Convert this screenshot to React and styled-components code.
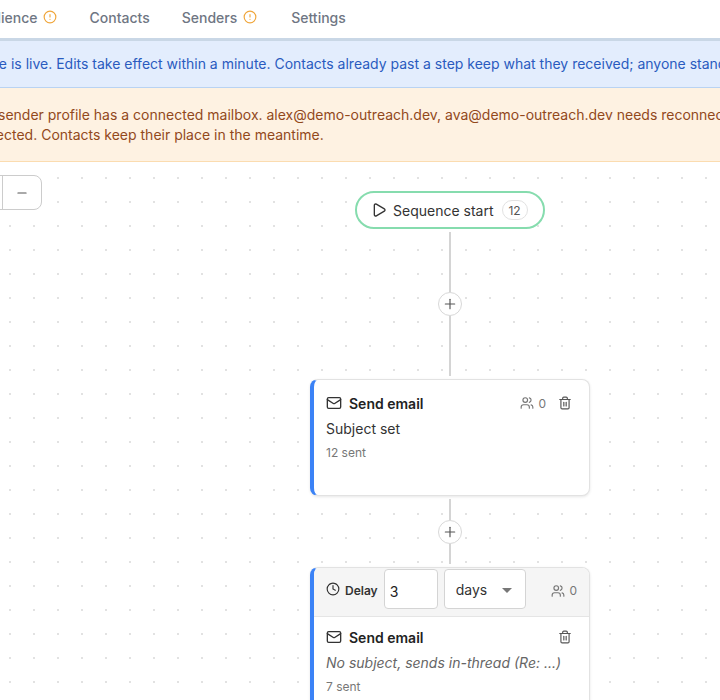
import React from 'react';
import styled, { createGlobalStyle } from 'styled-components';
import { CircleAlert, Clock, Mail, Minus, Play, Plus, Trash2, Users } from 'lucide-react';

const GlobalStyle = createGlobalStyle`
  html, body {
    margin: 0;
    height: 700px;
    overflow: hidden;
    background: #fff;
    font-family: Inter, "Liberation Sans", sans-serif;
  }
`;

const TABS = [
  { label: 'Audience', warn: true },
  { label: 'Contacts' },
  { label: 'Senders', warn: true },
  { label: 'Settings' },
];

const App = () => (
  <Viewport>
    <GlobalStyle />
    <Page>
      <TabBar>
        {TABS.map((tab) => (
          <Tab key={tab.label}>
            {tab.label}
            {tab.warn && <CircleAlert size={14} color="#f0a63c" />}
          </Tab>
        ))}
      </TabBar>
      <Banner $tone="info">
        This sequence is live. Edits take effect within a minute. Contacts already past a step keep what they received; anyone standing on a removed step moves on.
      </Banner>
      <Banner $tone="warn">
        Only one sender profile has a connected mailbox. alex@demo-outreach.dev, ava@demo-outreach.dev needs reconnecting and sends nothing until it
        <br />
        is reconnected. Contacts keep their place in the meantime.
      </Banner>
      <Canvas>
        <ZoomControl>
          <ZoomButton><Plus size={14} /></ZoomButton>
          <ZoomButton><Minus size={14} /></ZoomButton>
        </ZoomControl>
        <StartPill>
          <Play size={16} color="#333" />
          Sequence start
          <CountBadge>12</CountBadge>
        </StartPill>
        <Line $h={60} />
        <AddButton><Plus size={16} strokeWidth={1.75} /></AddButton>
        <Line $h={60} />
        <Card>
          <CardBody $min={115} $top={13}>
            <CardHead>
              <Mail size={16} color="#333" />
              <Title>Send email</Title>
              <Audience><Users size={14} />0</Audience>
              <TrashIcon size={14} />
            </CardHead>
            <Subject>Subject set</Subject>
            <Sent>12 sent</Sent>
          </CardBody>
        </Card>
        <Line $h={21} />
        <AddButton><Plus size={16} strokeWidth={1.75} /></AddButton>
        <Line $h={20} />
        <Card>
          <DelayBar>
            <Clock size={14} color="#333" />
            <DelayLabel>Delay</DelayLabel>
            <DelayInput readOnly value="3" />
            <UnitWrap>
              <UnitSelect defaultValue="days">
                <option value="days">days</option>
                <option value="hours">hours</option>
              </UnitSelect>
              <Caret />
            </UnitWrap>
            <Audience><Users size={14} />0</Audience>
          </DelayBar>
          <CardBody $min={110} $top={10}>
            <CardHead>
              <Mail size={16} color="#333" />
              <Title>Send email</Title>
              <TrashIcon size={14} />
            </CardHead>
            <Subject $muted>No subject, sends in-thread (Re: ...)</Subject>
            <Sent>7 sent</Sent>
          </CardBody>
        </Card>
      </Canvas>
    </Page>
  </Viewport>
);

const Viewport = styled.div`
  width: 720px;
  height: 700px;
  overflow: hidden;
`;

const Page = styled.div`
  width: 1140px;
  margin-left: -120px;
`;

const TabBar = styled.nav`
  display: flex;
  height: 38px;
  padding-left: 78px;
  border-bottom: 3px solid #c9d7e6;
`;

const Tab = styled.div`
  display: flex;
  align-items: center;
  gap: 6px;
  padding: 0 16px;
  height: 34px;
  font-size: 14px;
  font-weight: 500;
  color: #6f7683;

  &:last-child {
    margin-left: 2px;
  }
`;

const Banner = styled.div`
  padding: ${(p) => (p.$tone === 'info' ? '13px 16px 13px 30px' : '17px 16px 16px 55px')};
  font-size: 14px;
  line-height: 20px;
  white-space: nowrap;
  overflow: hidden;
  background: ${(p) => (p.$tone === 'info' ? '#e3edfd' : '#fef2e2')};
  color: ${(p) => (p.$tone === 'info' ? '#2a5bbf' : '#92491c')};
  border-bottom: 1px solid ${(p) => (p.$tone === 'info' ? '#b9d3f3' : '#fbdcb0')};
`;

const Canvas = styled.main`
  position: relative;
  display: flex;
  flex-direction: column;
  align-items: center;
  height: 600px;
  padding-top: 29px;
  background-color: #fff;
  background-image: radial-gradient(circle, #e2e2e2 1px, transparent 1px);
  background-size: 24px 24px;
  background-position: -2px 4px;
`;

const ZoomControl = styled.div`
  position: absolute;
  top: 13px;
  left: 83px;
  display: flex;
  height: 33px;
  background: #fff;
  border: 1px solid #ccc;
  border-radius: 8px;
`;

const ZoomButton = styled.div`
  display: flex;
  align-items: center;
  justify-content: center;
  width: 38px;
  color: #555;

  & + & {
    border-left: 1px solid #ccc;
  }
`;

const StartPill = styled.div`
  display: flex;
  align-items: center;
  box-sizing: border-box;
  gap: 6px;
  width: 190px;
  height: 38px;
  padding: 0 14px;
  background: #fff;
  border: 2px solid #86dcae;
  border-radius: 19px;
  font-size: 14px;
  color: #333;
  white-space: nowrap;
`;

const CountBadge = styled.span`
  display: flex;
  align-items: center;
  justify-content: center;
  box-sizing: border-box;
  width: 26px;
  height: 20px;
  margin-left: 2px;
  border: 1px solid #e2e2e2;
  border-radius: 10px;
  font-size: 12px;
  color: #555;
`;

const Line = styled.div`
  width: 2px;
  height: ${(p) => p.$h}px;
  margin: 3px 0;
  background: #d4d4d4;
`;

const AddButton = styled.div`
  position: relative;
  display: flex;
  align-items: center;
  justify-content: center;
  box-sizing: border-box;
  width: 24px;
  height: 24px;
  margin: -3px 0;
  background: #fff;
  border: 1px solid #d8d8d8;
  border-radius: 50%;
  color: #555;
`;

const Card = styled.section`
  box-sizing: border-box;
  width: 280px;
  flex-shrink: 0;
  background: #fff;
  border: 1px solid #e2e2e2;
  border-left: 4px solid #3b82f6;
  border-radius: 8px;
  box-shadow: 0 1px 3px rgba(0, 0, 0, 0.1);
  overflow: hidden;
`;

const CardBody = styled.div`
  box-sizing: border-box;
  min-height: ${(p) => p.$min}px;
  padding: ${(p) => p.$top}px 12px 12px;
`;

const CardHead = styled.div`
  display: flex;
  align-items: center;
  height: 20px;
`;

const Title = styled.span`
  margin-left: 7px;
  font-size: 14px;
  font-weight: 600;
  color: #222;
`;

const Audience = styled.span`
  display: flex;
  align-items: center;
  gap: 4px;
  margin-left: auto;
  font-size: 12px;
  color: #777;
`;

const TrashIcon = styled(Trash2)`
  margin-left: auto;
  margin-right: 5px;
  color: #555;

  ${Audience} + & {
    margin-left: 12px;
  }
`;

const Subject = styled.div`
  margin-top: 6px;
  font-size: 14px;
  line-height: 20px;
  color: ${(p) => (p.$muted ? '#666' : '#333')};
  font-style: ${(p) => (p.$muted ? 'italic' : 'normal')};
  white-space: nowrap;
`;

const Sent = styled.div`
  margin-top: 6px;
  font-size: 12px;
  line-height: 16px;
  color: #777;
`;

const DelayBar = styled.div`
  display: flex;
  align-items: flex-start;
  height: 47px;
  padding: 1px 12px 0;
  background: #f5f5f5;
  border-bottom: 1px solid #e5e5e5;

  & > svg {
    margin-top: 13px;
    flex-shrink: 0;
  }

  & > ${Audience} {
    margin-top: 14px;
  }
`;

const DelayLabel = styled.span`
  margin: 14px 6px 0 5px;
  font-size: 12px;
  line-height: 16px;
  font-weight: 600;
  color: #333;
`;

const DelayInput = styled.input`
  box-sizing: border-box;
  width: 54px;
  height: 40px;
  padding: 4px 5px 0;
  background: #fff;
  border: 1px solid #d4d4d4;
  border-radius: 4px;
  font: 14px Inter, "Liberation Sans", sans-serif;
  color: #222;
  outline: none;
`;

const UnitWrap = styled.div`
  position: relative;
  margin-left: 6px;
`;

const UnitSelect = styled.select`
  display: block;
  box-sizing: border-box;
  width: 82px;
  height: 40px;
  padding: 0 11px;
  appearance: none;
  background: #fff;
  border: 1px solid #d4d4d4;
  border-radius: 4px;
  font: 14px Inter, "Liberation Sans", sans-serif;
  color: #333;
`;

const Caret = styled.span`
  position: absolute;
  top: 19px;
  right: 14px;
  border-left: 5px solid transparent;
  border-right: 5px solid transparent;
  border-top: 5px solid #777;
`;

export default App;
